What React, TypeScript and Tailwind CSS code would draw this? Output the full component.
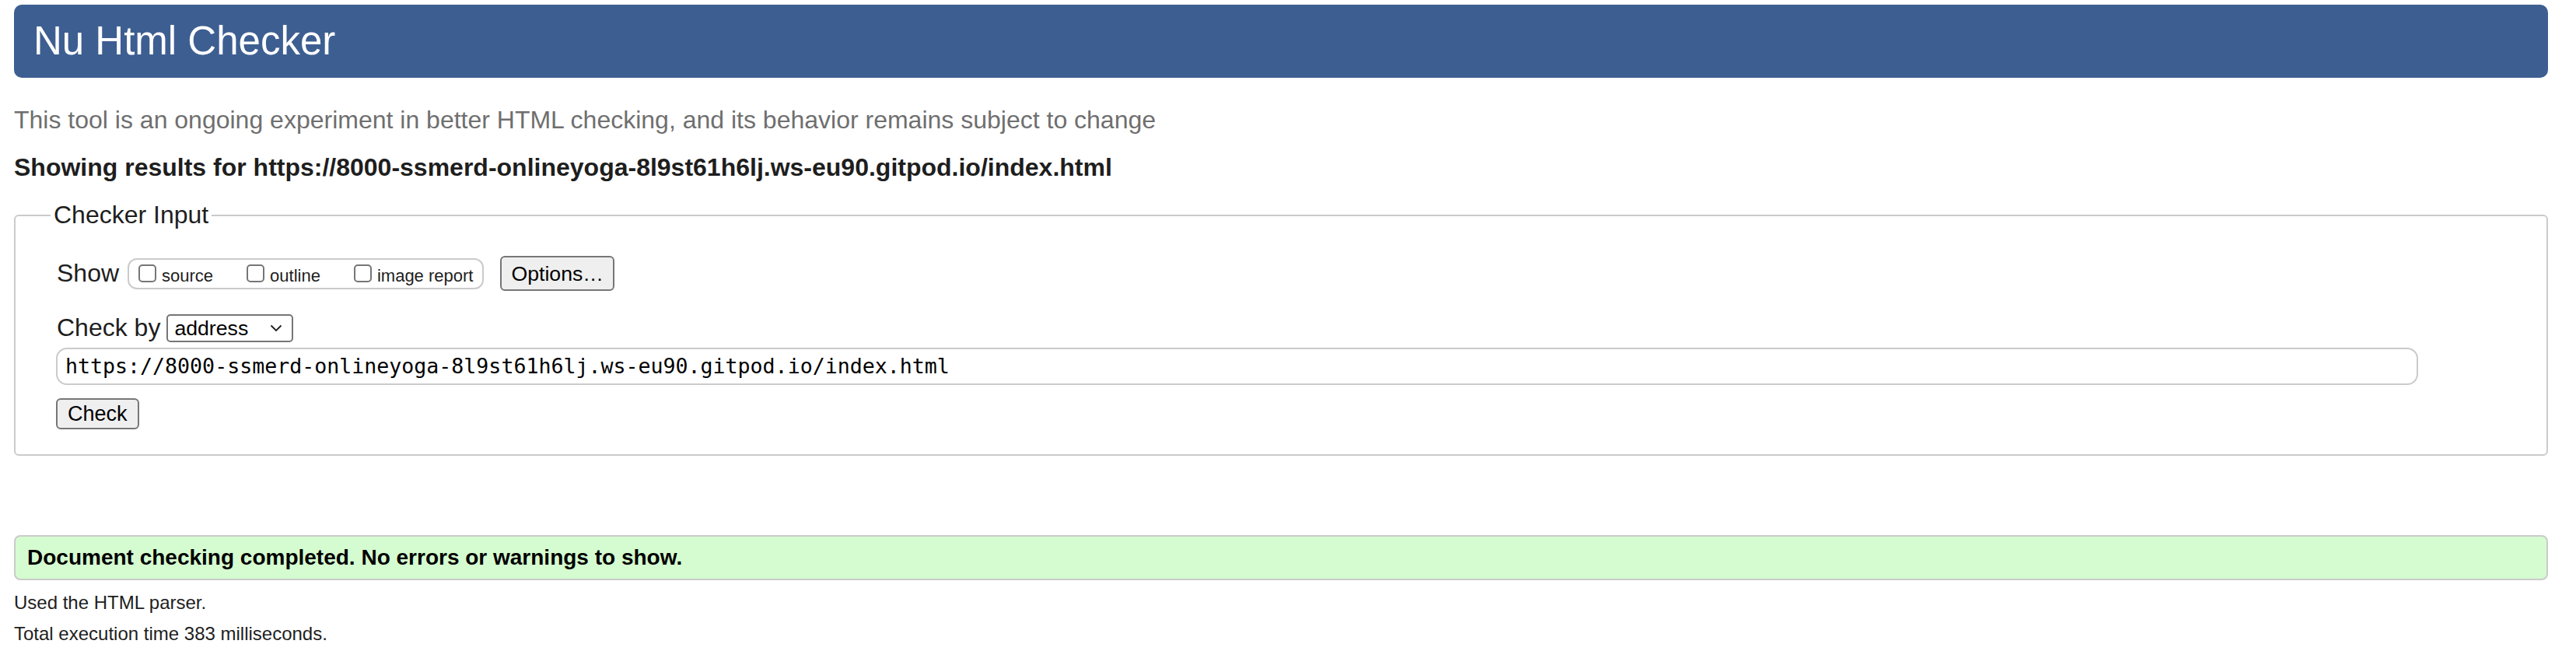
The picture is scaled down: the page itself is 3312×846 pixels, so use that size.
import React from 'react';

const pageUrl = 'https://8000-ssmerd-onlineyoga-8l9st61h6lj.ws-eu90.gitpod.io/index.html';

const Checkbox: React.FC<{ label: string }> = ({ label }) => (
  <label className="flex items-start">
    <span className="mt-[2px] block h-[23px] w-[23px] rounded-[5px] border-2 border-[#767676] bg-white" />
    <span className="ml-[7px] mt-[4px] text-[22px] leading-[26px] text-[#1e1e1e]">{label}</span>
  </label>
);

const App: React.FC = () => {
  return (
    <div className="min-h-[846px] bg-white pl-[18px] pr-[36px] pt-[6px] font-['Liberation_Sans',Arial,sans-serif] text-[#1e1e1e]">
      {/* header bar */}
      <div className="flex h-[94px] items-center rounded-[10px] bg-[#3d5e91] pl-[25px]">
        <h1 className="text-[51px] leading-[58px] text-white">Nu Html Checker</h1>
      </div>

      <p className="mt-[36px] text-[32px] leading-[37px] text-[#6f6f6f]">
        This tool is an ongoing experiment in better HTML checking, and its behavior remains subject to change
      </p>
      <p className="mt-[24px] text-[32px] font-bold leading-[37px] text-[#1e1e1e]">
        Showing results for {pageUrl}
      </p>

      {/* checker input */}
      <fieldset className="mt-[24px] rounded-[6px] border-2 border-[#cbcbcb] pb-[32px] pl-[45px] pr-[20px] pt-[34px]">
        <legend className="px-[4px] text-[32px] leading-[37px]">Checker Input</legend>

        <div className="flex items-center pl-[8px]">
          <span className="text-[32px] leading-[37px]">Show</span>
          <div className="ml-[11px] flex h-[40px] items-start gap-[43px] rounded-[12px] border-2 border-[#cbcbcb] pl-[12px] pr-[12px] pt-[4px]">
            <Checkbox label="source" />
            <Checkbox label="outline" />
            <Checkbox label="image report" />
          </div>
          <button className="ml-[21px] h-[45px] rounded-[6px] border-2 border-[#767676] bg-[#efefef] px-[12px] text-[26.67px] leading-[30px] text-black">
            Options…
          </button>
        </div>

        <div className="mt-[29px] flex items-center pl-[8px]">
          <span className="text-[32px] leading-[37px]">Check by</span>
          <div className="ml-[8px] flex h-[36px] w-[163px] items-center justify-between rounded-[5px] border-2 border-[#767676] bg-white pl-[8px] pr-[12px]">
            <span className="text-[26.67px] leading-[30px] text-black">address</span>
            <svg width="16" height="10" viewBox="0 0 16 10" fill="none">
              <path d="M1.5 1.5 L8 8 L14.5 1.5" stroke="#1e1e1e" strokeWidth="1.8" />
            </svg>
          </div>
        </div>

        <div className="ml-[7px] mt-[7px] flex h-[48px] w-[3037px] items-center rounded-[14px] border-2 border-[#cbcbcb] pl-[10px] font-['DejaVu_Sans_Mono',monospace] text-[26.6px] text-black">
          {pageUrl}
        </div>

        <button className="ml-[7px] mt-[17px] block h-[40px] rounded-[6px] border-2 border-[#767676] bg-[#efefef] px-[13px] text-[27px] leading-[30px] text-black">
          Check
        </button>
      </fieldset>

      {/* result */}
      <div className="mt-[102px] rounded-[8px] border-2 border-[#cbcbcb] bg-[#d5fcd0] py-[11px] pl-[15px]">
        <p className="text-[28px] font-bold leading-[32px] text-black">
          Document checking completed. No errors or warnings to show.
        </p>
      </div>

      <p className="mt-[15px] text-[24px] leading-[28px]">Used the HTML parser.</p>
      <p className="mt-[12px] text-[24px] leading-[28px]">Total execution time 383 milliseconds.</p>
    </div>
  );
};

export default App;
